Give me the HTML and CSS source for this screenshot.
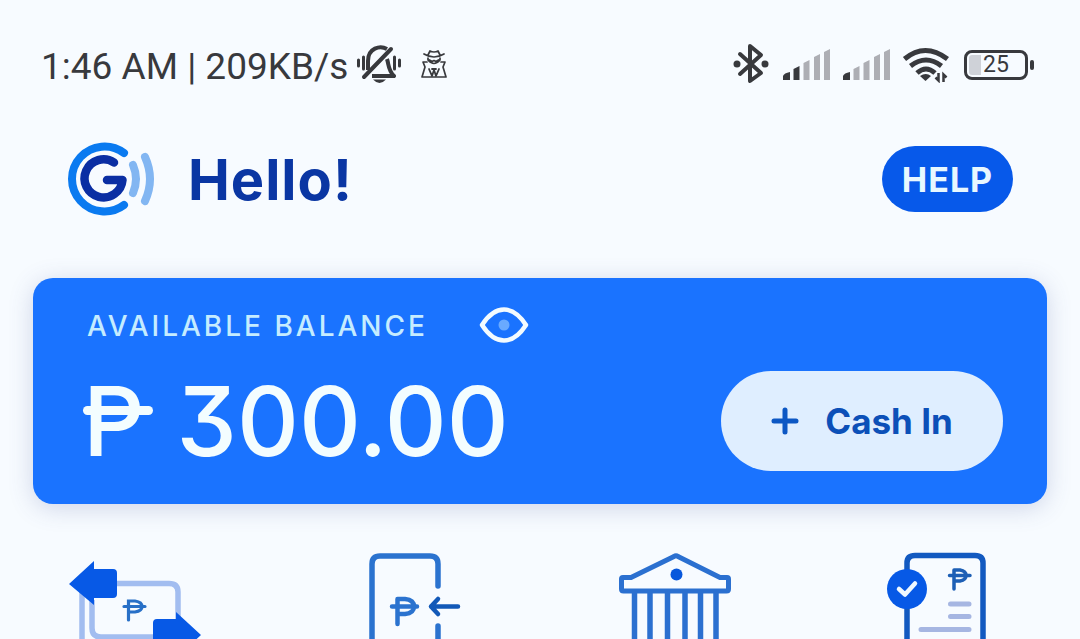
FILE: index.html
```html
<!DOCTYPE html>
<html lang="en">
<head>
<meta charset="utf-8">
<meta name="viewport" content="width=device-width, initial-scale=1">
<title>Wallet</title>
<link rel="stylesheet" href="styles.css">
</head>
<body>
<div class="status">
  <span class="status-text">1:46 AM | 209KB/s</span>
  <svg class="icon-bell" width="46" height="42" viewBox="355 44 46 42" fill="none" stroke="#38393d" aria-hidden="true">
    <path d="M363 77 390 49" stroke-width="4" stroke-linecap="round"/>
    <path d="M367 70V61C367 48 379 45 386 49M386 59C388 65 387 70 393 76H371" stroke-width="4" stroke-linejoin="round"/>
    <path d="M372 79.500h13q-6.500 7-13 0z" fill="#38393d" stroke="none"/>
    <path d="M362.500 57v12M393.500 57v12" stroke-width="3" stroke-linecap="round"/>
    <path d="M357.500 60v6M398.500 60v6" stroke-width="3" stroke-linecap="round"/>
  </svg>
  <svg class="icon-agent" width="28" height="32" viewBox="419 49 28 32" fill="none" stroke="#38393d" stroke-width="1.700" stroke-linejoin="round" stroke-linecap="round" aria-hidden="true">
    <path d="M423 54Q433 60 443 54M427 55 429 51Q433 53 437 51L439 55"/>
    <path d="M427 58v2Q433 67 439 60v-2M428.500 60l2.500 1.500 2-1 2 1 2.500-1.500"/>
    <path d="M426 62H422L424 67 421 77H445L442 67 444 62H440"/>
    <path d="M428 69 431 76 433 70 435 76 438 69M431 69h4" stroke-width="1.800"/>
  </svg>
  <div class="status-right">
    <svg width="38" height="42" viewBox="732 44 38 42" fill="none" stroke="#38393d" aria-hidden="true">
      <path d="M740 54 761 73 750 81V46L761 55 740 74" stroke-width="4" stroke-linejoin="round" stroke-linecap="round"/>
      <circle cx="737" cy="64" r="3.500" fill="#38393d" stroke="none"/><circle cx="765" cy="64" r="3.500" fill="#38393d" stroke="none"/>
    </svg>
    <svg width="48" height="34" viewBox="782 48 48 34" fill="#adaeb4" aria-hidden="true">
      <path d="M783 80v-4q1-3 7-4v8z" fill="#38393d"/><path d="M793.500 80V69l6-3v14z" fill="#38393d"/>
      <path d="M803.500 80V63l6-3v20zM814 80V57l6-3v26zM824 80V52l6-3v31z"/>
    </svg>
    <svg width="48" height="34" viewBox="842 48 48 34" fill="#adaeb4" aria-hidden="true">
      <path d="M843 80v-4q1-3 7-4v8z" fill="#38393d"/>
      <path d="M853.500 80V69l6-3v14zM863.500 80V63l6-3v20zM874 80V57l6-3v26zM884 80V52l6-3v31z"/>
    </svg>
    <svg width="48" height="36" viewBox="902 47 48 36" fill="none" stroke="#38393d" stroke-width="5" aria-hidden="true">
      <path d="M904.500 59Q925 42 947.500 59M910.500 66Q926 54 941.500 66M917 73Q926 65 935 73"/>
      <path d="M920 76q6-4 11 0l-5.500 5z" fill="#38393d" stroke="none"/>
      <path d="M938.500 73v7.500l-3-3M943.500 82v-7.500l3 3" stroke-width="2.500"/>
    </svg>
    <div class="battery"><span class="battery-level">25</span></div>
  </div>
</div>

<header class="header">
  <svg class="logo" width="90" height="76" viewBox="66 141 90 76" fill="none" stroke-linecap="round" aria-label="Logo" role="img">
    <path d="M124 153A32.500 32.500 0 1 0 124 205" stroke="#0a7af0" stroke-width="8"/>
    <path d="M114 162.500A19 19 0 1 0 122.500 180H107" stroke="#0a2ea3" stroke-width="8.500" stroke-linejoin="round"/>
    <path d="M133 165Q139 179 133 193M145 157Q155 179 145 201" stroke="#82b6f2" stroke-width="8"/>
  </svg>
  <h1 class="hello">Hello!</h1>
  <button class="help" type="button">HELP</button>
</header>

<main>
  <section class="card">
    <div class="balance">
      <div class="balance-label">
        <span class="balance-title">AVAILABLE BALANCE</span>
        <button class="eye" type="button" aria-label="Hide balance">
          <svg width="50" height="38" viewBox="0 0 50 38" fill="none"><path d="M3 19Q13 3.500 25 3.500T47 19Q37 34.500 25 34.500T3 19z" stroke="#f3fbff" stroke-width="4.500" stroke-linejoin="round"/><circle cx="25" cy="19" r="5.500" fill="#69aaff"/></svg>
        </button>
      </div>
      <div class="amount"><span class="peso">P</span><span>300.00</span></div>
    </div>
    <button class="cash-in" type="button">
      <svg width="28" height="28" viewBox="0 0 28 28" stroke="#0c57c4" stroke-width="5" stroke-linecap="round" aria-hidden="true"><path d="M14 3v22M3 14h22"/></svg>
      <span>Cash In</span>
    </button>
  </section>

  <nav class="services">
    <a href="#send" aria-label="Send">
      <svg width="200" height="91" viewBox="50 548 200 91" fill="none">
        <path d="M82 590V645M92 600V628Q92 637 101 637H170Q178 637 178 629V592Q178 583.500 169 583.500H110" stroke="#a2bdf0" stroke-width="5.500"/>
        <path d="M69 584 94 561V569H113Q117 569 117 573V594Q117 598 113 598H94V605z" fill="#0759e6"/>
        <path d="M201 635 176 612V619H157Q153 619 153 623V650H176V658z" fill="#0759e6"/>
        <path d="M128.500 620V601H135Q142 602 142 606.500T135 612H129M124 606.500H145" stroke="#2870c7" stroke-width="3.200" stroke-linecap="round"/>
      </svg>
    </a>
    <a href="#load" aria-label="Load">
      <svg width="200" height="91" viewBox="310 548 200 91" fill="none" stroke-linecap="round" stroke-linejoin="round">
        <path d="M372 645V564Q372 556 380 556H430Q438 556 438 564V586M438 626V645" stroke="#2b73cf" stroke-width="5.500"/>
        <path d="M397.500 624V599H405Q414 600 414 606.500T405 614H398M392 606.500H417" stroke="#2b73cf" stroke-width="4.500"/>
        <path d="M458 606.500H431M438 599 431 606.500 438 614" stroke="#1259b8" stroke-width="4.500"/>
      </svg>
    </a>
    <a href="#transfer" aria-label="Bank transfer">
      <svg width="200" height="91" viewBox="570 548 200 91" fill="none" stroke="#2b70d0">
        <path d="M621.500 579Q621.500 577.500 623 577.500H631L674 556.500Q676 555 678 556.500L720 577.500H727Q728.500 577.500 728.500 579V589Q728.500 591 726.500 591H623.500Q621.500 591 621.500 589z" stroke-width="5" stroke-linejoin="round"/>
        <circle cx="676.500" cy="574.500" r="6" fill="#0858dc" stroke="none"/>
        <path d="M634.500 591v54M650 591v54M667.500 591v54M685 591v54M700.500 591v54M716 591v54" stroke-width="5.500"/>
      </svg>
    </a>
    <a href="#bills" aria-label="Bills">
      <svg width="200" height="91" viewBox="830 548 200 91" fill="none" stroke-linecap="round" stroke-linejoin="round">
        <path d="M907 645V563Q907 555.500 915 555.500H975Q983 555.500 983 563V645" stroke="#1259c0" stroke-width="5.500"/>
        <circle cx="907" cy="589" r="20" fill="#0759e6"/>
        <path d="M899 589 905 594.500 915 583.500" stroke="#eff8ff" stroke-width="4.500"/>
        <path d="M954 589V570H960Q966 571 966 575.500T960 581H954M949.500 575.500H970" stroke="#1d5fb5" stroke-width="3.500"/>
        <path d="M950.500 604H969M950.500 616.500H969M921 629.500H969" stroke="#a6b6e2" stroke-width="5"/>
      </svg>
    </a>
  </nav>
</main>
</body>
</html>
```
FILE: styles.css
```css
* { box-sizing: border-box; }
body {
  margin: 0;
  background: #f7fbff;
  font-family: Inter, "Open Sans", sans-serif;
  overflow: hidden;
}
button {
  border: 0;
  padding: 0;
  background: none;
  font: inherit;
  cursor: pointer;
}
svg { display: block; flex: none; }

.status {
  display: flex;
  align-items: center;
  padding: 43px 46px 0 41px;
  color: #38393d;
  font-family: Roboto, sans-serif;
  white-space: nowrap;
}
.status-text {
  padding-top: 4px;
  font-size: 37px;
  line-height: 40px;
}
.icon-bell { margin-left: 8px; }
.icon-agent { margin-left: 18px; }
.status-right {
  display: flex;
  align-items: center;
  gap: 12px;
  margin-left: auto;
}
.battery {
  position: relative;
  width: 64px;
  height: 30px;
  margin: 0 6px 0 2px;
  border: 3px solid #38393d;
  border-radius: 8px;
  background: linear-gradient(90deg, #cfd2d8 25%, transparent 25%);
  background-clip: content-box;
  padding: 2px;
}
.battery::after {
  content: "";
  position: absolute;
  right: -9px;
  top: 7px;
  width: 4px;
  height: 10px;
  border-radius: 2px;
  background: #38393d;
}
.battery-level {
  display: block;
  font-size: 23px;
  line-height: 20px;
  text-align: center;
}

.header {
  display: flex;
  align-items: center;
  padding: 54px 67px 61px 66px;
}
.hello {
  margin: 0 0 0 32px;
  padding-top: 2px;
  color: #0a36a3;
  font-size: 56px;
  line-height: 74px;
  font-weight: 700;
  letter-spacing: 1px;
}
.help {
  width: 131px;
  height: 66px;
  margin-left: auto;
  border-radius: 33px;
  background: #0759ea;
  color: #e8f8ff;
  font-size: 34px;
  font-weight: 700;
  letter-spacing: 1px;
}

.card {
  display: flex;
  align-items: flex-end;
  justify-content: space-between;
  margin: 0 33px;
  padding: 28px 44px 33px 50px;
  border-radius: 20px;
  background: #1a73ff;
  box-shadow: 0 4px 24px rgba(70, 80, 150, 0.22);
}
.balance-label {
  display: flex;
  align-items: center;
  margin-left: 4px;
  color: #c5ecff;
  font-size: 28px;
  line-height: 38px;
  font-weight: 500;
  letter-spacing: 3px;
}
.balance-title {
  min-width: 392px;
  padding-top: 2px;
  line-height: 36px;
}
.amount {
  display: flex;
  gap: 28px;
  margin-top: 27px;
  color: #f3fdff;
  font-size: 96px;
  line-height: 100px;
  font-weight: 500;
  font-feature-settings: "cv09";
}
.peso {
  position: relative;
  padding: 0 4px 0 0;
}
.peso::after {
  content: "";
  position: absolute;
  left: 0;
  right: -4px;
  top: 35px;
  height: 9px;
  border-radius: 5px;
  background: #f3fdff;
}
.cash-in {
  display: flex;
  align-items: center;
  justify-content: center;
  gap: 26px;
  width: 282px;
  height: 100px;
  border-radius: 50px;
  background: #dfeeff;
  color: #0c50b8;
  font-size: 35px;
  font-weight: 700;
}

.services {
  display: grid;
  grid-template-columns: repeat(4, 1fr);
  padding: 44px 20px 0;
}
.services a { display: flex; justify-content: center; }
```
